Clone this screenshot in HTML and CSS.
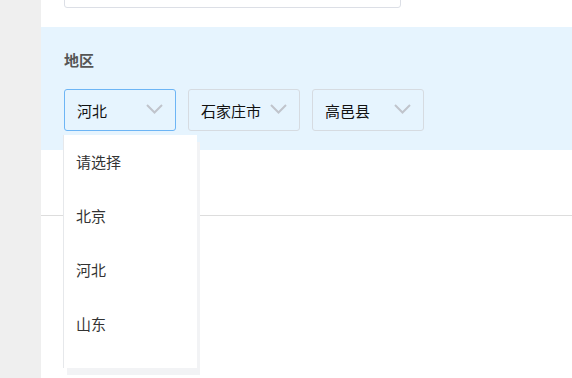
FILE: index.html
```html
<!DOCTYPE html>
<html lang="zh-CN">
<head>
    <meta charset="UTF-8">
    <meta name="viewport" content="width=device-width, initial-scale=1.0">
    <title>地区选择</title>
    <link rel="stylesheet" href="styles.css">
</head>
<body>

    <div class="sidebar"></div>

    <div class="main">
        <div class="top-input"></div>

        <div class="region">
            <h3 class="label">地区</h3>
            <div class="selects">
                <div class="select active">
                    <span>河北</span>
                    <svg class="arrow" width="17" height="10" viewBox="0 0 17 10"><path d="M1 1l7.5 7.5L16 1" fill="none" stroke="#c0c4cc" stroke-width="2"/></svg>
                    <ul class="dropdown">
                        <li>请选择</li>
                        <li>北京</li>
                        <li>河北</li>
                        <li>山东</li>
                    </ul>
                </div>
                <div class="select">
                    <span>石家庄市</span>
                    <svg class="arrow" width="17" height="10" viewBox="0 0 17 10"><path d="M1 1l7.5 7.5L16 1" fill="none" stroke="#c0c4cc" stroke-width="2"/></svg>
                </div>
                <div class="select">
                    <span>高邑县</span>
                    <svg class="arrow" width="17" height="10" viewBox="0 0 17 10"><path d="M1 1l7.5 7.5L16 1" fill="none" stroke="#c0c4cc" stroke-width="2"/></svg>
                </div>
            </div>
        </div>

        <div class="divider"></div>
        <div class="rest"></div>
    </div>

</body>
</html>
```

FILE: styles.css
```css
body {
    margin: 0;
    font-family: "Noto Sans CJK SC", "Liberation Sans", sans-serif;
    display: flex;
    height: 100vh;
    overflow: hidden;
    background: #fff;
}
.sidebar {
    width: 41px;
    background: #efefef;
    flex-shrink: 0;
}
.main {
    flex: 1;
    background: #fff;
}
.top-input {
    margin: -30px 0 0 23px;
    width: 335px;
    height: 36px;
    border: 1px solid #dcdfe6;
    border-radius: 3px;
}
.region {
    margin-top: 19px;
    height: 123px;
    background: #e6f4fe;
    padding: 0 23px;
    box-sizing: border-box;
}
.label {
    margin: 0;
    padding-top: 24px;
    font-size: 15px;
    line-height: 18px;
    font-weight: bold;
    color: #555;
}
.selects {
    display: flex;
    gap: 12px;
    margin-top: 20px;
}
.select {
    position: relative;
    width: 112px;
    height: 42px;
    box-sizing: border-box;
    border: 1px solid #d6dbe1;
    border-radius: 3px;
    display: flex;
    align-items: center;
    justify-content: space-between;
    padding: 0 12px;
    font-size: 15px;
    color: #111;
}
.select.active {
    border-color: #6db5f5;
}
.arrow {
    margin-top: -2px;
}
.dropdown {
    position: absolute;
    top: 45px;
    left: -1px;
    width: 133px;
    height: 233px;
    margin: 0;
    padding: 0;
    list-style: none;
    background: #fff;
    box-shadow: 3px 7px 0 #f2f3f5, -1px 0 0 #e6e8eb;
    z-index: 2;
}
.dropdown li {
    height: 54px;
    line-height: 54px;
    padding-left: 12px;
    font-size: 15px;
    color: #333;
}
.divider {
    height: 65px;
    border-bottom: 1px solid #dddddd;
}
```
